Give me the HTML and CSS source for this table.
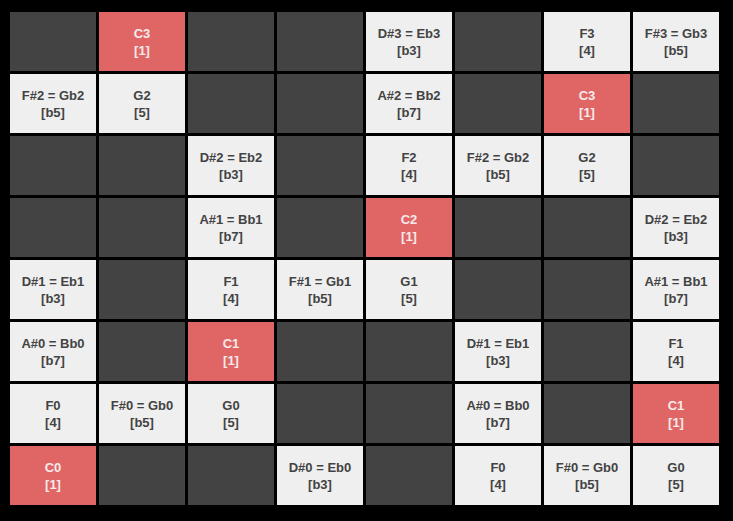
FILE: index.html
```html
<!DOCTYPE html>
<html>
<head>
<meta charset="utf-8">
<link rel="stylesheet" href="styles.css">
</head>
<body>
<div class="grid">
  <div class="cell dark"></div>
  <div class="cell red">C3<br>[1]</div>
  <div class="cell dark"></div>
  <div class="cell dark"></div>
  <div class="cell light">D#3 = Eb3<br>[b3]</div>
  <div class="cell dark"></div>
  <div class="cell light">F3<br>[4]</div>
  <div class="cell light">F#3 = Gb3<br>[b5]</div>

  <div class="cell light">F#2 = Gb2<br>[b5]</div>
  <div class="cell light">G2<br>[5]</div>
  <div class="cell dark"></div>
  <div class="cell dark"></div>
  <div class="cell light">A#2 = Bb2<br>[b7]</div>
  <div class="cell dark"></div>
  <div class="cell red">C3<br>[1]</div>
  <div class="cell dark"></div>

  <div class="cell dark"></div>
  <div class="cell dark"></div>
  <div class="cell light">D#2 = Eb2<br>[b3]</div>
  <div class="cell dark"></div>
  <div class="cell light">F2<br>[4]</div>
  <div class="cell light">F#2 = Gb2<br>[b5]</div>
  <div class="cell light">G2<br>[5]</div>
  <div class="cell dark"></div>

  <div class="cell dark"></div>
  <div class="cell dark"></div>
  <div class="cell light">A#1 = Bb1<br>[b7]</div>
  <div class="cell dark"></div>
  <div class="cell red">C2<br>[1]</div>
  <div class="cell dark"></div>
  <div class="cell dark"></div>
  <div class="cell light">D#2 = Eb2<br>[b3]</div>

  <div class="cell light">D#1 = Eb1<br>[b3]</div>
  <div class="cell dark"></div>
  <div class="cell light">F1<br>[4]</div>
  <div class="cell light">F#1 = Gb1<br>[b5]</div>
  <div class="cell light">G1<br>[5]</div>
  <div class="cell dark"></div>
  <div class="cell dark"></div>
  <div class="cell light">A#1 = Bb1<br>[b7]</div>

  <div class="cell light">A#0 = Bb0<br>[b7]</div>
  <div class="cell dark"></div>
  <div class="cell red">C1<br>[1]</div>
  <div class="cell dark"></div>
  <div class="cell dark"></div>
  <div class="cell light">D#1 = Eb1<br>[b3]</div>
  <div class="cell dark"></div>
  <div class="cell light">F1<br>[4]</div>

  <div class="cell light">F0<br>[4]</div>
  <div class="cell light">F#0 = Gb0<br>[b5]</div>
  <div class="cell light">G0<br>[5]</div>
  <div class="cell dark"></div>
  <div class="cell dark"></div>
  <div class="cell light">A#0 = Bb0<br>[b7]</div>
  <div class="cell dark"></div>
  <div class="cell red">C1<br>[1]</div>

  <div class="cell red">C0<br>[1]</div>
  <div class="cell dark"></div>
  <div class="cell dark"></div>
  <div class="cell light">D#0 = Eb0<br>[b3]</div>
  <div class="cell dark"></div>
  <div class="cell light">F0<br>[4]</div>
  <div class="cell light">F#0 = Gb0<br>[b5]</div>
  <div class="cell light">G0<br>[5]</div>
</div>
</body>
</html>
```
FILE: styles.css
```css
html, body {
  margin: 0;
  padding: 0;
  background: #000;
}
body {
  width: 733px;
  height: 521px;
  overflow: hidden;
  font-family: "Liberation Sans", Arial, sans-serif;
}
.grid {
  display: grid;
  grid-template-columns: repeat(8, 86px);
  grid-template-rows: repeat(8, 59px);
  gap: 3px;
  padding: 12px 0 0 10px;
}
.cell {
  display: flex;
  align-items: center;
  justify-content: center;
  text-align: center;
  font-size: 13px;
  font-weight: bold;
  line-height: 17px;
}
.dark {
  background: #434343;
}
.light {
  background: #efefef;
  color: #434343;
}
.red {
  background: #e06666;
  color: #f6eaea;
}
```
